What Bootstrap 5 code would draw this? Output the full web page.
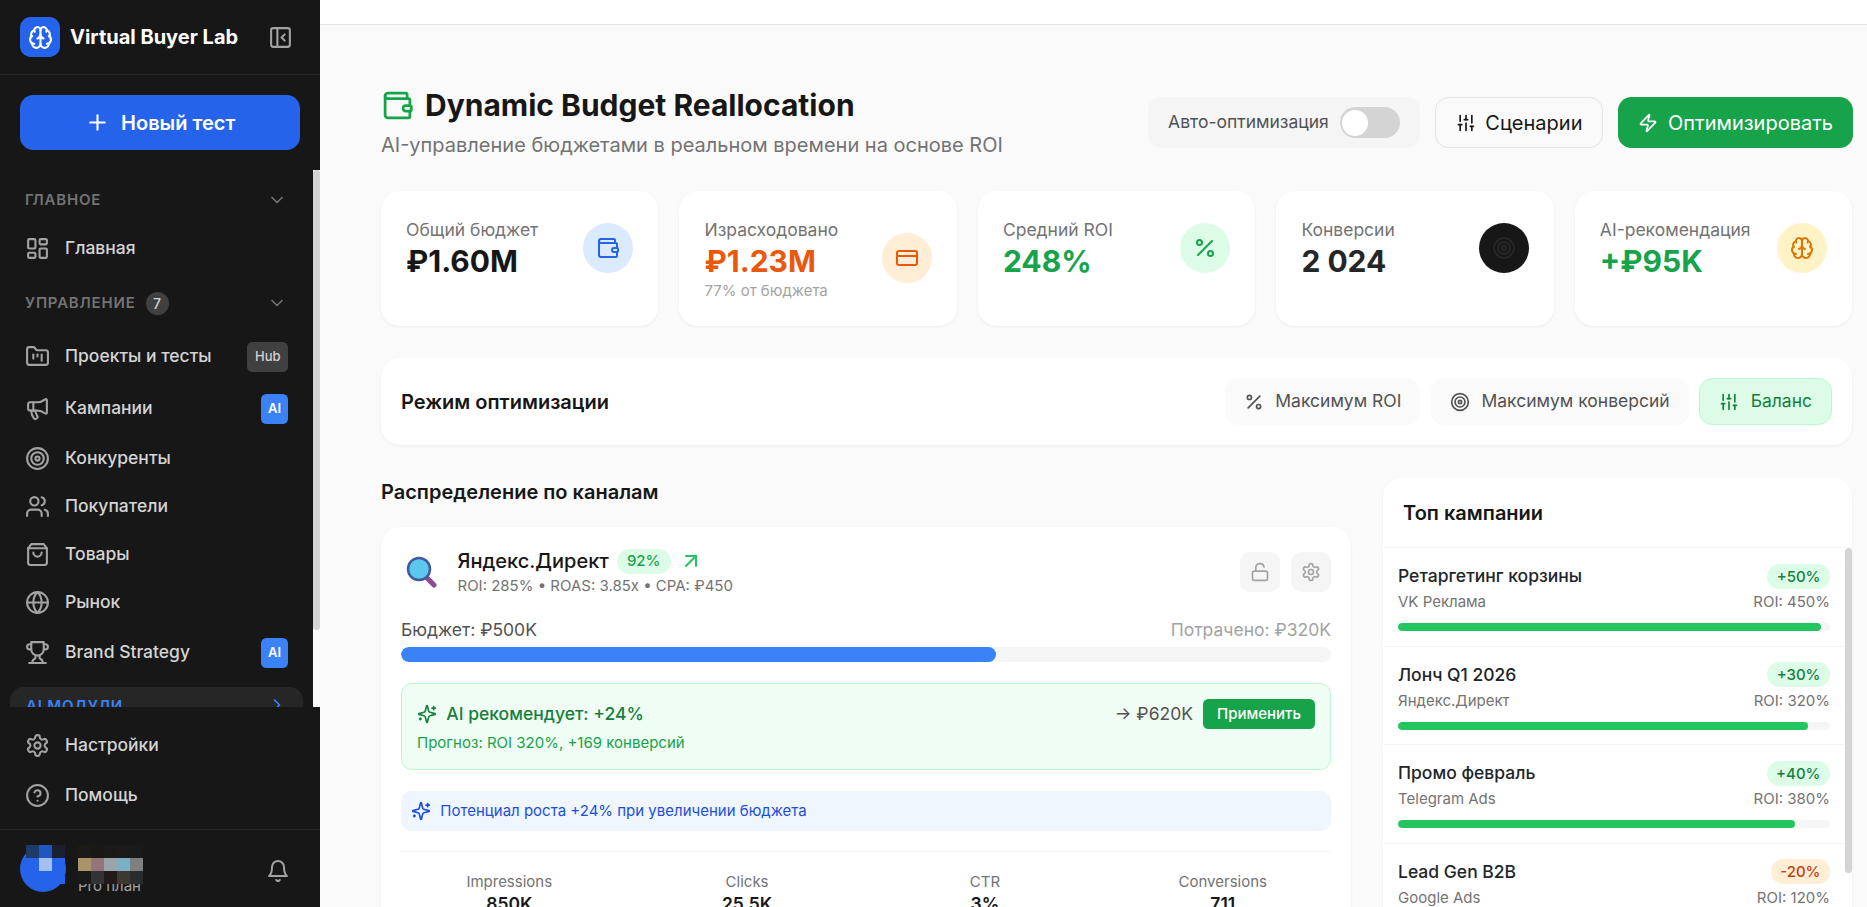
<!DOCTYPE html>
<html lang="ru">
<head>
    <meta charset="UTF-8">
    <title>Dynamic Budget Reallocation</title>
    <meta name="viewport" content="width=device-width, initial-scale=1">
    <link href="https://cdn.jsdelivr.net/npm/bootstrap@5.3.0/dist/css/bootstrap.min.css" rel="stylesheet">
    <style>
        html, body { height: 100%; }
        body { font-family: "Inter", "Liberation Sans", sans-serif; color: #171717; background: #fafafa; overflow: hidden; }
        .ic { fill: none; stroke: currentColor; stroke-width: 2; stroke-linecap: round; stroke-linejoin: round; flex-shrink: 0; display: block; }
        .ic-20 { width: 20px; height: 20px; }
        .ic-24 { width: 24px; height: 24px; }
        .ic-25 { width: 25px; height: 25px; }
        .ic-32 { width: 33px; height: 33px; }
        .ic-muted { color: #a3a3a3; }

        /* sidebar */
        .side { width: 320px; height: 907px; background: #171717; flex-shrink: 0; }
        .side-brand { height: 75px; padding: 0 27px 0 20px; border-bottom: 1px solid #262626; }
        .side-logo { width: 40px; height: 40px; border-radius: 10.67px; background: #2563eb; color: #fff; }
        .side-name { color: #fff; font-size: 20px; font-weight: 700; margin-left: 10px; white-space: nowrap; }
        .side-new { padding: 20px 20px 0; height: 95px; }
        .btn.side-add { height: 55px; background: #2563eb; color: #fff; font-size: 20px; font-weight: 600; border: 0; border-radius: 13.33px; gap: 11.5px; }
        .side-scroll { height: 537px; overflow: hidden; }
        .side-inner { width: 313px; padding: 15px 10px 0; }
        .side-rail { width: 7px; background: #fafafa; }
        .rail-thumb { background: #d4d4d4; border-radius: 4px; }
        .side-rail .rail-thumb { height: 460px; }
        .side-head { height: 30px; padding: 0 16px 0 15px; color: #737373; font-size: 15px; font-weight: 600; letter-spacing: .8px; }
        .side-count { width: 23px; height: 23px; border-radius: 50%; background: #404040; color: #d4d4d4; font-size: 14px; font-weight: 500; margin-left: 10px; letter-spacing: 0; }
        .side-item { min-height: 48px; padding: 0 15px; gap: 15px; color: #d4d4d4; font-size: 17.5px; font-weight: 500; }
        .side-item.tall { min-height: 52px; }
        .side-tag { height: 30px; padding: 0 7px; border-radius: 5.33px; font-size: 13px; font-weight: 600; display: flex; align-items: center; color: #fff; background: #3b82f6; }
        .side-tag.hub { background: #404040; color: #d4d4d4; font-weight: 500; padding: 0 7.5px; }
        .side-group { height: 56px; margin-top: 8px; padding: 8px 16px; border-radius: 13.33px; background: #262626; color: #3b82f6; font-size: 15px; font-weight: 600; letter-spacing: .8px; }
        .side-foot { position: relative; flex: 1; background: #171717; }
        .side-links { padding: 13px 10px 0; height: 123px; border-bottom: 1px solid #262626; }
        .side-links .side-item { min-height: 50px; }
        .side-user { height: 76px; padding: 0 30px 0 20px; position: relative; }
        .side-ava { width: 46px; height: 46px; border-radius: 50%; background: #2563eb; margin-top: 2px; }
        .side-plan { color: #a3a3a3; font-size: 15px; margin: 36px 0 0 12px; }
        .side-user .ic { margin-top: 6px; }
        .mosaic { position: absolute; display: grid; grid-auto-rows: 13px; top: 14.5px; }
        .mosaic i { display: block; }
        .mosaic-a { left: 26px; grid-template-columns: repeat(3, 13px); }
        .mosaic-t { left: 78px; grid-template-columns: repeat(5, 13px); }

        /* main */
        .page { min-width: 0; height: 907px; overflow: hidden; }
        .page-top { height: 25px; background: #fff; border-bottom: 1px solid #e5e5e5; }
        .page-body { padding: 60px 15px 0 61px; }
        .page-title { font-size: 30px; font-weight: 700; line-height: 40px; margin: 0; }
        .page-sub { font-size: 20px; line-height: 30px; color: #737373; margin-top: 5px; }
        .head-tools { gap: 15px; margin: 12px -1px 0 0; }
        .auto-box { height: 51px; padding: 0 20px; border-radius: 13.33px; background: #f5f5f5; color: #525252; font-size: 17.5px; gap: 11px; }
        .auto-switch { width: 60px; height: 31px; border-radius: 16px; background: #d4d4d4; padding: 2.5px; }
        .auto-switch i { display: block; width: 26px; height: 26px; border-radius: 50%; background: #fff; }
        .btn.head-btn { height: 51px; padding: 0 20px; border-radius: 13.33px; font-size: 20px; font-weight: 400; gap: 9.5px; }
        .btn.head-plain { background: #fafafa; border: 1px solid #e5e5e5; color: #171717; }
        .btn.head-go { background: #16a34a; border: 0; color: #fff; }

        .stat-row { display: grid; grid-template-columns: repeat(5, 1fr); gap: 21.33px; margin-top: 31px; }
        .card.box { border: 0; border-radius: 18.67px; box-shadow: 0 1px 3px rgba(0,0,0,.06); background: #fff; }
        .stat-card { height: 135px; padding: 26px 25px; }
        .stat-label { font-size: 17.5px; color: #737373; line-height: 25px; }
        .stat-value { font-size: 30px; font-weight: 700; line-height: 38px; }
        .stat-note { font-size: 15px; color: #a3a3a3; line-height: 21px; }
        .stat-icon { width: 50px; height: 50px; border-radius: 50%; flex-shrink: 0; margin-top: 6px; }

        .mode-card { height: 87px; margin-top: 32px; padding: 0 20px; }
        .mode-title { font-size: 20px; font-weight: 600; margin: 0; }
        .btn.mode-btn { height: 47px; padding: 0 19px; border-radius: 13.33px; background: #fafafa; border: 0; color: #525252; font-size: 17.5px; font-weight: 400; gap: 11.33px; }
        .btn.mode-btn.on { background: #dcfce7; border: 1px solid #bbf7d0; color: #15803d; }

        .two-cols { display: flex; gap: 32px; margin-top: 33px; align-items: flex-start; }
        .col-left { flex: 1; min-width: 0; }
        .col-right { width: 469px; flex-shrink: 0; }
        .sec-title { font-size: 20px; font-weight: 600; line-height: 28px; margin: 0 0 21px; }

        .chan-card { padding: 20px 20px; height: 560px; }
        .chan-emoji { width: 32px; height: 32px; margin: 0 19.5px 0 5px; flex-shrink: 0; }
        .chan-name { font-size: 20px; font-weight: 500; line-height: 28px; }
        .chan-pill { height: 25px; padding: 0 10px; border-radius: 13px; background: #dcfce7; color: #16a34a; font-size: 15px; font-weight: 500; }
        .chan-sub { font-size: 15px; color: #737373; line-height: 22px; }
        .square-btn { width: 40px; height: 40px; border-radius: 10.67px; background: #f5f5f5; color: #a3a3a3; }
        .bud-row { font-size: 17.5px; line-height: 26px; margin-top: 20px; }
        .progress.bud-bar { height: 15px; background: #f5f5f5; border-radius: 8px; margin-top: 4px; }
        .bud-bar .progress-bar { background: #3b82f6; border-radius: 8px; }
        .rec-box { height: 87px; margin-top: 21px; padding: 15px 15px 0; background: #f0fdf4; border: 1px solid #bbf7d0; border-radius: 10.67px; }
        .rec-main { font-size: 17.5px; font-weight: 500; color: #15803d; gap: 9.33px; }
        .rec-sum { font-size: 17.5px; color: #525252; }
        .btn.rec-btn { height: 30px; padding: 0 14px; background: #16a34a; border: 0; color: #fff; font-size: 15px; font-weight: 500; border-radius: 5.33px; margin-left: 10px; }
        .rec-note { font-size: 15px; color: #16a34a; margin-top: 3px; line-height: 22px; }
        .hint-box { height: 40px; margin-top: 21px; padding: 0 10px; gap: 9.33px; background: #eff6ff; border-radius: 10.67px; color: #1d4ed8; font-size: 15px; }
        .metric-grid { display: grid; grid-template-columns: repeat(4, 1fr); gap: 21.33px; margin-top: 20px; padding-top: 20px; border-top: 1px solid #f5f5f5; text-align: center; }
        .metric-label { font-size: 15px; color: #737373; line-height: 20px; }
        .metric-value { font-size: 17.5px; font-weight: 600; line-height: 24px; }

        .top-card { height: 620px; overflow: hidden; }
        .top-head { height: 70px; padding-left: 20px; border-bottom: 1px solid #f5f5f5; flex-shrink: 0; }
        .top-title { font-size: 20px; font-weight: 600; margin: 0; }
        .top-wrap { height: 533px; }
        .top-rail { width: 7px; flex-shrink: 0; }
        .top-rail .rail-thumb { height: 325px; }
        .top-list { height: 533px; overflow: hidden; }
        .list-group-item.top-row { height: 98.67px; padding: 15px 15px 0; border: 0; border-bottom: 1px solid #f5f5f5; border-radius: 0; }
        .top-name { font-size: 17.5px; font-weight: 500; line-height: 26px; }
        .badge.top-badge { height: 25px; padding: 0 9.5px; border-radius: 13px; font-size: 15px; font-weight: 500; display: flex; align-items: center; }
        .top-up { background: #dcfce7; color: #15803d; }
        .top-down { background: #ffedd5; color: #c2410c; }
        .top-sub { font-size: 15px; color: #737373; line-height: 22px; margin-top: 2px; }
        .progress.top-bar { height: 8px; background: #f5f5f5; border-radius: 4px; margin-top: 10px; }
        .top-bar .progress-bar { background: #22c55e; border-radius: 4px; }
    </style>
</head>
<body>

<svg width="0" height="0" style="position:absolute">
    <symbol id="i-brain" viewBox="0 0 24 24"><path d="M12 18V5"/><path d="M15 13a4.17 4.17 0 0 1-3-4 4.17 4.17 0 0 1-3 4"/><path d="M17.598 6.5A3 3 0 1 0 12 5a3 3 0 1 0-5.598 1.5"/><path d="M17.997 5.125a4 4 0 0 1 2.526 5.77"/><path d="M18 18a4 4 0 0 0 2-7.464"/><path d="M19.967 17.483A4 4 0 1 1 12 18a4 4 0 1 1-7.967-.517"/><path d="M6 18a4 4 0 0 1-2-7.464"/><path d="M6.003 5.125a4 4 0 0 0-2.526 5.77"/></symbol>
    <symbol id="i-panel" viewBox="0 0 24 24"><rect width="18" height="18" x="3" y="3" rx="2"/><path d="M9 3v18"/><path d="m16 15-3-3 3-3"/></symbol>
    <symbol id="i-plus" viewBox="0 0 24 24"><path d="M5 12h14"/><path d="M12 5v14"/></symbol>
    <symbol id="i-down" viewBox="0 0 24 24"><path d="m6 9 6 6 6-6"/></symbol>
    <symbol id="i-right" viewBox="0 0 24 24"><path d="m9 18 6-6-6-6"/></symbol>
    <symbol id="i-dash" viewBox="0 0 24 24"><rect width="7" height="9" x="3" y="3" rx="1"/><rect width="7" height="5" x="14" y="3" rx="1"/><rect width="7" height="9" x="14" y="12" rx="1"/><rect width="7" height="5" x="3" y="16" rx="1"/></symbol>
    <symbol id="i-folder" viewBox="0 0 24 24"><path d="M4 20h16a2 2 0 0 0 2-2V8a2 2 0 0 0-2-2h-7.93a2 2 0 0 1-1.66-.9l-.82-1.2A2 2 0 0 0 7.93 3H4a2 2 0 0 0-2 2v13c0 1.1.9 2 2 2Z"/><path d="M8 10v4"/><path d="M12 10v2"/><path d="M16 10v6"/></symbol>
    <symbol id="i-mega" viewBox="0 0 24 24"><path d="M11 6a13 13 0 0 0 8.4-2.8A1 1 0 0 1 21 4v12a1 1 0 0 1-1.6.8A13 13 0 0 0 11 14H5a2 2 0 0 1-2-2V8a2 2 0 0 1 2-2z"/><path d="M6 14a12 12 0 0 0 2.4 7.2 2 2 0 0 0 3.2-2.4A8 8 0 0 1 10 14"/><path d="M8 6v8"/></symbol>
    <symbol id="i-target" viewBox="0 0 24 24"><circle cx="12" cy="12" r="10"/><circle cx="12" cy="12" r="6"/><circle cx="12" cy="12" r="2"/></symbol>
    <symbol id="i-users" viewBox="0 0 24 24"><path d="M16 21v-2a4 4 0 0 0-4-4H6a4 4 0 0 0-4 4v2"/><circle cx="9" cy="7" r="4"/><path d="M22 21v-2a4 4 0 0 0-3-3.87"/><path d="M16 3.13a4 4 0 0 1 0 7.75"/></symbol>
    <symbol id="i-bag" viewBox="0 0 24 24"><path d="M6 2 3 6v14a2 2 0 0 0 2 2h14a2 2 0 0 0 2-2V6l-3-4Z"/><path d="M3 6h18"/><path d="M16 10a4 4 0 0 1-8 0"/></symbol>
    <symbol id="i-globe" viewBox="0 0 24 24"><circle cx="12" cy="12" r="10"/><path d="M12 2a14.5 14.5 0 0 0 0 20 14.5 14.5 0 0 0 0-20"/><path d="M2 12h20"/></symbol>
    <symbol id="i-trophy" viewBox="0 0 24 24"><path d="M6 9H4.5a2.5 2.5 0 0 1 0-5H6"/><path d="M18 9h1.5a2.5 2.5 0 0 0 0-5H18"/><path d="M4 22h16"/><path d="M10 14.66V17c0 .55-.47.98-.97 1.21C7.85 18.75 7 20.24 7 22"/><path d="M14 14.66V17c0 .55.47.98.97 1.21C16.15 18.75 17 20.24 17 22"/><path d="M18 2H6v7a6 6 0 0 0 12 0V2Z"/></symbol>
    <symbol id="i-gear" viewBox="0 0 24 24"><path d="M12.22 2h-.44a2 2 0 0 0-2 2v.18a2 2 0 0 1-1 1.73l-.43.25a2 2 0 0 1-2 0l-.15-.08a2 2 0 0 0-2.73.73l-.22.38a2 2 0 0 0 .73 2.73l.15.1a2 2 0 0 1 1 1.72v.51a2 2 0 0 1-1 1.74l-.15.09a2 2 0 0 0-.73 2.73l.22.38a2 2 0 0 0 2.73.73l.15-.08a2 2 0 0 1 2 0l.43.25a2 2 0 0 1 1 1.73V20a2 2 0 0 0 2 2h.44a2 2 0 0 0 2-2v-.18a2 2 0 0 1 1-1.73l.43-.25a2 2 0 0 1 2 0l.15.08a2 2 0 0 0 2.73-.73l.22-.39a2 2 0 0 0-.73-2.73l-.15-.08a2 2 0 0 1-1-1.74v-.5a2 2 0 0 1 1-1.74l.15-.09a2 2 0 0 0 .73-2.73l-.22-.38a2 2 0 0 0-2.73-.73l-.15.08a2 2 0 0 1-2 0l-.43-.25a2 2 0 0 1-1-1.73V4a2 2 0 0 0-2-2z"/><circle cx="12" cy="12" r="3"/></symbol>
    <symbol id="i-help" viewBox="0 0 24 24"><circle cx="12" cy="12" r="10"/><path d="M9.09 9a3 3 0 0 1 5.83 1c0 2-3 3-3 3"/><path d="M12 17h.01"/></symbol>
    <symbol id="i-bell" viewBox="0 0 24 24"><path d="M6 8a6 6 0 0 1 12 0c0 7 3 9 3 9H3s3-2 3-9"/><path d="M10.3 21a1.94 1.94 0 0 0 3.4 0"/></symbol>
    <symbol id="i-wallet" viewBox="0 0 24 24"><path d="M19 7V4a1 1 0 0 0-1-1H5a2 2 0 0 0 0 4h15a1 1 0 0 1 1 1v4h-3a2 2 0 0 0 0 4h3a1 1 0 0 0 1-1v-2a1 1 0 0 0-1-1"/><path d="M3 5v14a2 2 0 0 0 2 2h15a1 1 0 0 0 1-1v-4"/></symbol>
    <symbol id="i-card" viewBox="0 0 24 24"><rect width="20" height="14" x="2" y="5" rx="2"/><path d="M2 10h20"/></symbol>
    <symbol id="i-percent" viewBox="0 0 24 24"><path d="M19 5 5 19"/><circle cx="6.5" cy="6.5" r="2.5"/><circle cx="17.5" cy="17.5" r="2.5"/></symbol>
    <symbol id="i-sliders" viewBox="0 0 24 24"><path d="M10 8h4"/><path d="M12 21v-9"/><path d="M12 8V3"/><path d="M17 16h4"/><path d="M19 12V3"/><path d="M19 21v-5"/><path d="M3 14h4"/><path d="M5 10V3"/><path d="M5 21v-7"/></symbol>
    <symbol id="i-zap" viewBox="0 0 24 24"><path d="M4 14a1 1 0 0 1-.78-1.63l9.9-10.2a.5.5 0 0 1 .86.46l-1.92 6.02A1 1 0 0 0 13 10h7a1 1 0 0 1 .78 1.63l-9.9 10.2a.5.5 0 0 1-.86-.46l1.92-6.02A1 1 0 0 0 11 14z"/></symbol>
    <symbol id="i-spark" viewBox="0 0 24 24"><path d="M9.937 15.5A2 2 0 0 0 8.5 14.063l-6.135-1.582a.5.5 0 0 1 0-.962L8.5 9.936A2 2 0 0 0 9.937 8.5l1.582-6.135a.5.5 0 0 1 .963 0L14.063 8.5A2 2 0 0 0 15.5 9.937l6.135 1.581a.5.5 0 0 1 0 .964L15.5 14.063a2 2 0 0 0-1.437 1.437l-1.582 6.135a.5.5 0 0 1-.963 0z"/><path d="M20 3v4"/><path d="M22 5h-4"/><path d="M4 17v2"/><path d="M5 18H3"/></symbol>
    <symbol id="i-lock" viewBox="0 0 24 24"><rect width="18" height="11" x="3" y="11" rx="2"/><path d="M7 11V7a5 5 0 0 1 9.9-1"/></symbol>
    <symbol id="i-arrow" viewBox="0 0 24 24"><path d="M7 7h10v10"/><path d="M7 17 17 7"/></symbol>
</svg>

<div class="d-flex">
    <!-- sidebar -->
    <aside class="side d-flex flex-column">
        <div class="side-brand d-flex align-items-center">
            <div class="side-logo d-flex align-items-center justify-content-center"><svg class="ic ic-25"><use href="#i-brain"/></svg></div>
            <div class="side-name flex-grow-1">Virtual Buyer Lab</div>
            <svg class="ic ic-25 ic-muted"><use href="#i-panel"/></svg>
        </div>
        <div class="side-new">
            <button class="btn side-add w-100 d-flex align-items-center justify-content-center"><svg class="ic ic-25"><use href="#i-plus"/></svg>Новый тест</button>
        </div>
        <div class="side-scroll d-flex">
            <div class="side-inner">
                <div class="side-head d-flex align-items-center justify-content-between">ГЛАВНОЕ <svg class="ic ic-20"><use href="#i-down"/></svg></div>
                <div class="side-item d-flex align-items-center" style="margin-top:9px"><svg class="ic ic-25 ic-muted"><use href="#i-dash"/></svg>Главная</div>
                <div class="side-head d-flex align-items-center" style="margin-top:16px"><span>УПРАВЛЕНИЕ</span><span class="side-count d-flex align-items-center justify-content-center">7</span><svg class="ic ic-20 ms-auto"><use href="#i-down"/></svg></div>
                <div class="side-item tall d-flex align-items-center" style="margin-top:12.5px"><svg class="ic ic-25 ic-muted"><use href="#i-folder"/></svg><span class="flex-grow-1">Проекты и тесты</span><span class="side-tag hub">Hub</span></div>
                <div class="side-item tall d-flex align-items-center"><svg class="ic ic-25 ic-muted"><use href="#i-mega"/></svg><span class="flex-grow-1">Кампании</span><span class="side-tag">AI</span></div>
                <div class="side-item d-flex align-items-center"><svg class="ic ic-25 ic-muted"><use href="#i-target"/></svg>Конкуренты</div>
                <div class="side-item d-flex align-items-center"><svg class="ic ic-25 ic-muted"><use href="#i-users"/></svg>Покупатели</div>
                <div class="side-item d-flex align-items-center"><svg class="ic ic-25 ic-muted"><use href="#i-bag"/></svg>Товары</div>
                <div class="side-item d-flex align-items-center"><svg class="ic ic-25 ic-muted"><use href="#i-globe"/></svg>Рынок</div>
                <div class="side-item tall d-flex align-items-center"><svg class="ic ic-25 ic-muted"><use href="#i-trophy"/></svg><span class="flex-grow-1">Brand Strategy</span><span class="side-tag">AI</span></div>
                <div class="side-group d-flex justify-content-between">AI МОДУЛИ <svg class="ic ic-20"><use href="#i-right"/></svg></div>
            </div>
            <div class="side-rail"><div class="rail-thumb"></div></div>
        </div>
        <div class="side-foot">
            <div class="side-links">
                <div class="side-item d-flex align-items-center"><svg class="ic ic-25 ic-muted"><use href="#i-gear"/></svg>Настройки</div>
                <div class="side-item d-flex align-items-center"><svg class="ic ic-25 ic-muted"><use href="#i-help"/></svg>Помощь</div>
            </div>
            <div class="side-user d-flex align-items-center">
                <div class="side-ava"></div>
                <div class="side-plan flex-grow-1">Pro план</div>
                <svg class="ic ic-24 ic-muted"><use href="#i-bell"/></svg>
                <div class="mosaic mosaic-a">
                    <i style="background:#1e3a66"></i><i style="background:#1f57c0"></i><i style="background:#1a2030"></i>
                    <i style="background:#2563eb"></i><i style="background:#a5bff5"></i><i style="background:#2563eb"></i>
                    <i style="background:#2563eb"></i><i style="background:#2563eb"></i><i style="background:#2563eb"></i>
                </div>
                <div class="mosaic mosaic-t">
                    <i style="background:#1a1a16"></i><i style="background:#1a1817"></i><i style="background:#1b1a19"></i><i style="background:#1c1b19"></i><i style="background:#191a1a"></i>
                    <i style="background:#a89468"></i><i style="background:#94767a"></i><i style="background:#99a5aa"></i><i style="background:#7ab0c5"></i><i style="background:#7f7f7f"></i>
                    <i style="background:#1a1a1a"></i><i style="background:#333335"></i><i style="background:#211a18"></i><i style="background:#3d3830"></i><i style="background:#2a2d2d"></i>
                </div>
            </div>
        </div>
    </aside>

    <!-- main -->
    <main class="page flex-grow-1">
        <div class="page-top"></div>
        <div class="page-body">
            <div class="d-flex justify-content-between">
                <div>
                    <div class="d-flex align-items-center" style="gap:11px">
                        <svg class="ic ic-32" style="color:#16a34a"><use href="#i-wallet"/></svg>
                        <h1 class="page-title">Dynamic Budget Reallocation</h1>
                    </div>
                    <div class="page-sub">AI-управление бюджетами в реальном времени на основе ROI</div>
                </div>
                <div class="head-tools d-flex align-items-start">
                    <div class="auto-box d-flex align-items-center"><span>Авто-оптимизация</span><div class="auto-switch"><i></i></div></div>
                    <button class="btn head-btn head-plain d-flex align-items-center"><svg class="ic ic-20"><use href="#i-sliders"/></svg>Сценарии</button>
                    <button class="btn head-btn head-go d-flex align-items-center"><svg class="ic ic-20"><use href="#i-zap"/></svg>Оптимизировать</button>
                </div>
            </div>

            <div class="stat-row">
                <div class="card box stat-card flex-row align-items-start justify-content-between">
                    <div><div class="stat-label">Общий бюджет</div><div class="stat-value">₽1.60M</div></div>
                    <div class="stat-icon d-flex align-items-center justify-content-center" style="background:#dbeafe;color:#2563eb"><svg class="ic ic-24"><use href="#i-wallet"/></svg></div>
                </div>
                <div class="card box stat-card flex-row align-items-start justify-content-between">
                    <div><div class="stat-label">Израсходовано</div><div class="stat-value" style="color:#ea580c">₽1.23M</div><div class="stat-note">77% от бюджета</div></div>
                    <div class="stat-icon d-flex align-items-center justify-content-center" style="background:#ffedd5;color:#ea580c;margin-top:16px"><svg class="ic ic-24"><use href="#i-card"/></svg></div>
                </div>
                <div class="card box stat-card flex-row align-items-start justify-content-between">
                    <div><div class="stat-label">Средний ROI</div><div class="stat-value" style="color:#16a34a">248%</div></div>
                    <div class="stat-icon d-flex align-items-center justify-content-center" style="background:#dcfce7;color:#16a34a"><svg class="ic ic-24"><use href="#i-percent"/></svg></div>
                </div>
                <div class="card box stat-card flex-row align-items-start justify-content-between">
                    <div><div class="stat-label">Конверсии</div><div class="stat-value" style="color:#262626">2 024</div></div>
                    <div class="stat-icon d-flex align-items-center justify-content-center" style="background:#171717;color:#262626"><svg class="ic ic-24"><use href="#i-target"/></svg></div>
                </div>
                <div class="card box stat-card flex-row align-items-start justify-content-between">
                    <div><div class="stat-label">AI-рекомендация</div><div class="stat-value" style="color:#16a34a">+₽95K</div></div>
                    <div class="stat-icon d-flex align-items-center justify-content-center" style="background:#fef3c7;color:#d97706"><svg class="ic ic-24"><use href="#i-brain"/></svg></div>
                </div>
            </div>

            <div class="card box mode-card flex-row align-items-center justify-content-between">
                <h2 class="mode-title">Режим оптимизации</h2>
                <div class="d-flex" style="gap:10.67px">
                    <button class="btn mode-btn d-flex align-items-center"><svg class="ic ic-20"><use href="#i-percent"/></svg>Максимум ROI</button>
                    <button class="btn mode-btn d-flex align-items-center"><svg class="ic ic-20"><use href="#i-target"/></svg>Максимум конверсий</button>
                    <button class="btn mode-btn on d-flex align-items-center"><svg class="ic ic-20"><use href="#i-sliders"/></svg>Баланс</button>
                </div>
            </div>

            <div class="two-cols">
                <div class="col-left">
                    <h2 class="sec-title">Распределение по каналам</h2>
                    <div class="card box chan-card">
                        <div class="d-flex align-items-center">
                            <svg class="chan-emoji" viewBox="0 0 32 32">
                                <path d="M21 22 L28 29" stroke="#8b4a96" stroke-width="5" stroke-linecap="round"/>
                                <circle cx="13" cy="13" r="11" fill="#5bc8ee" stroke="#42599f" stroke-width="2.5"/>
                            </svg>
                            <div class="flex-grow-1">
                                <div class="d-flex align-items-center">
                                    <span class="chan-name">Яндекс.Директ</span>
                                    <span class="chan-pill d-flex align-items-center ms-2">92%</span>
                                    <svg class="ic ic-24 ms-2" style="color:#22c55e"><use href="#i-arrow"/></svg>
                                </div>
                                <div class="chan-sub">ROI: 285% • ROAS: 3.85x • CPA: ₽450</div>
                            </div>
                            <div class="d-flex" style="gap:10.67px">
                                <div class="square-btn d-flex align-items-center justify-content-center"><svg class="ic ic-20"><use href="#i-lock"/></svg></div>
                                <div class="square-btn d-flex align-items-center justify-content-center"><svg class="ic ic-20"><use href="#i-gear"/></svg></div>
                            </div>
                        </div>
                        <div class="bud-row d-flex justify-content-between"><span style="color:#525252">Бюджет: ₽500K</span><span style="color:#a3a3a3">Потрачено: ₽320K</span></div>
                        <div class="progress bud-bar"><div class="progress-bar" style="width:64%"></div></div>
                        <div class="rec-box">
                            <div class="d-flex align-items-center">
                                <div class="rec-main d-flex align-items-center flex-grow-1"><svg class="ic ic-20"><use href="#i-spark"/></svg>AI рекомендует: +24%</div>
                                <span class="rec-sum">→ ₽620K</span>
                                <button class="btn rec-btn d-flex align-items-center">Применить</button>
                            </div>
                            <div class="rec-note">Прогноз: ROI 320%, +169 конверсий</div>
                        </div>
                        <div class="hint-box d-flex align-items-center"><svg class="ic ic-20"><use href="#i-spark"/></svg>Потенциал роста +24% при увеличении бюджета</div>
                        <div class="metric-grid">
                            <div><div class="metric-label">Impressions</div><div class="metric-value">850K</div></div>
                            <div><div class="metric-label">Clicks</div><div class="metric-value">25.5K</div></div>
                            <div><div class="metric-label">CTR</div><div class="metric-value">3%</div></div>
                            <div><div class="metric-label">Conversions</div><div class="metric-value">711</div></div>
                        </div>
                    </div>
                </div>
                <div class="col-right">
                    <div class="card box top-card">
                        <div class="top-head d-flex align-items-center"><h2 class="top-title">Топ кампании</h2></div>
                        <div class="top-wrap d-flex">
                            <div class="top-list list-group list-group-flush flex-grow-1">
                                <div class="list-group-item top-row flex-shrink-0">
                                    <div class="d-flex justify-content-between align-items-center"><span class="top-name">Ретаргетинг корзины</span><span class="badge top-badge top-up">+50%</span></div>
                                    <div class="top-sub d-flex justify-content-between"><span>VK Реклама</span><span>ROI: 450%</span></div>
                                    <div class="progress top-bar"><div class="progress-bar" style="width:98%"></div></div>
                                </div>
                                <div class="list-group-item top-row flex-shrink-0">
                                    <div class="d-flex justify-content-between align-items-center"><span class="top-name">Лонч Q1 2026</span><span class="badge top-badge top-up">+30%</span></div>
                                    <div class="top-sub d-flex justify-content-between"><span>Яндекс.Директ</span><span>ROI: 320%</span></div>
                                    <div class="progress top-bar"><div class="progress-bar" style="width:95%"></div></div>
                                </div>
                                <div class="list-group-item top-row flex-shrink-0">
                                    <div class="d-flex justify-content-between align-items-center"><span class="top-name">Промо февраль</span><span class="badge top-badge top-up">+40%</span></div>
                                    <div class="top-sub d-flex justify-content-between"><span>Telegram Ads</span><span>ROI: 380%</span></div>
                                    <div class="progress top-bar"><div class="progress-bar" style="width:92%"></div></div>
                                </div>
                                <div class="list-group-item top-row flex-shrink-0">
                                    <div class="d-flex justify-content-between align-items-center"><span class="top-name">Lead Gen B2B</span><span class="badge top-badge top-down">-20%</span></div>
                                    <div class="top-sub d-flex justify-content-between"><span>Google Ads</span><span>ROI: 120%</span></div>
                                    <div class="progress top-bar"><div class="progress-bar" style="width:60%"></div></div>
                                </div>
                            </div>
                            <div class="top-rail"><div class="rail-thumb"></div></div>
                        </div>
                    </div>
                </div>
            </div>
        </div>
    </main>
</div>

<script src="https://cdn.jsdelivr.net/npm/bootstrap@5.3.0/dist/js/bootstrap.bundle.min.js"></script>
</body>
</html>
